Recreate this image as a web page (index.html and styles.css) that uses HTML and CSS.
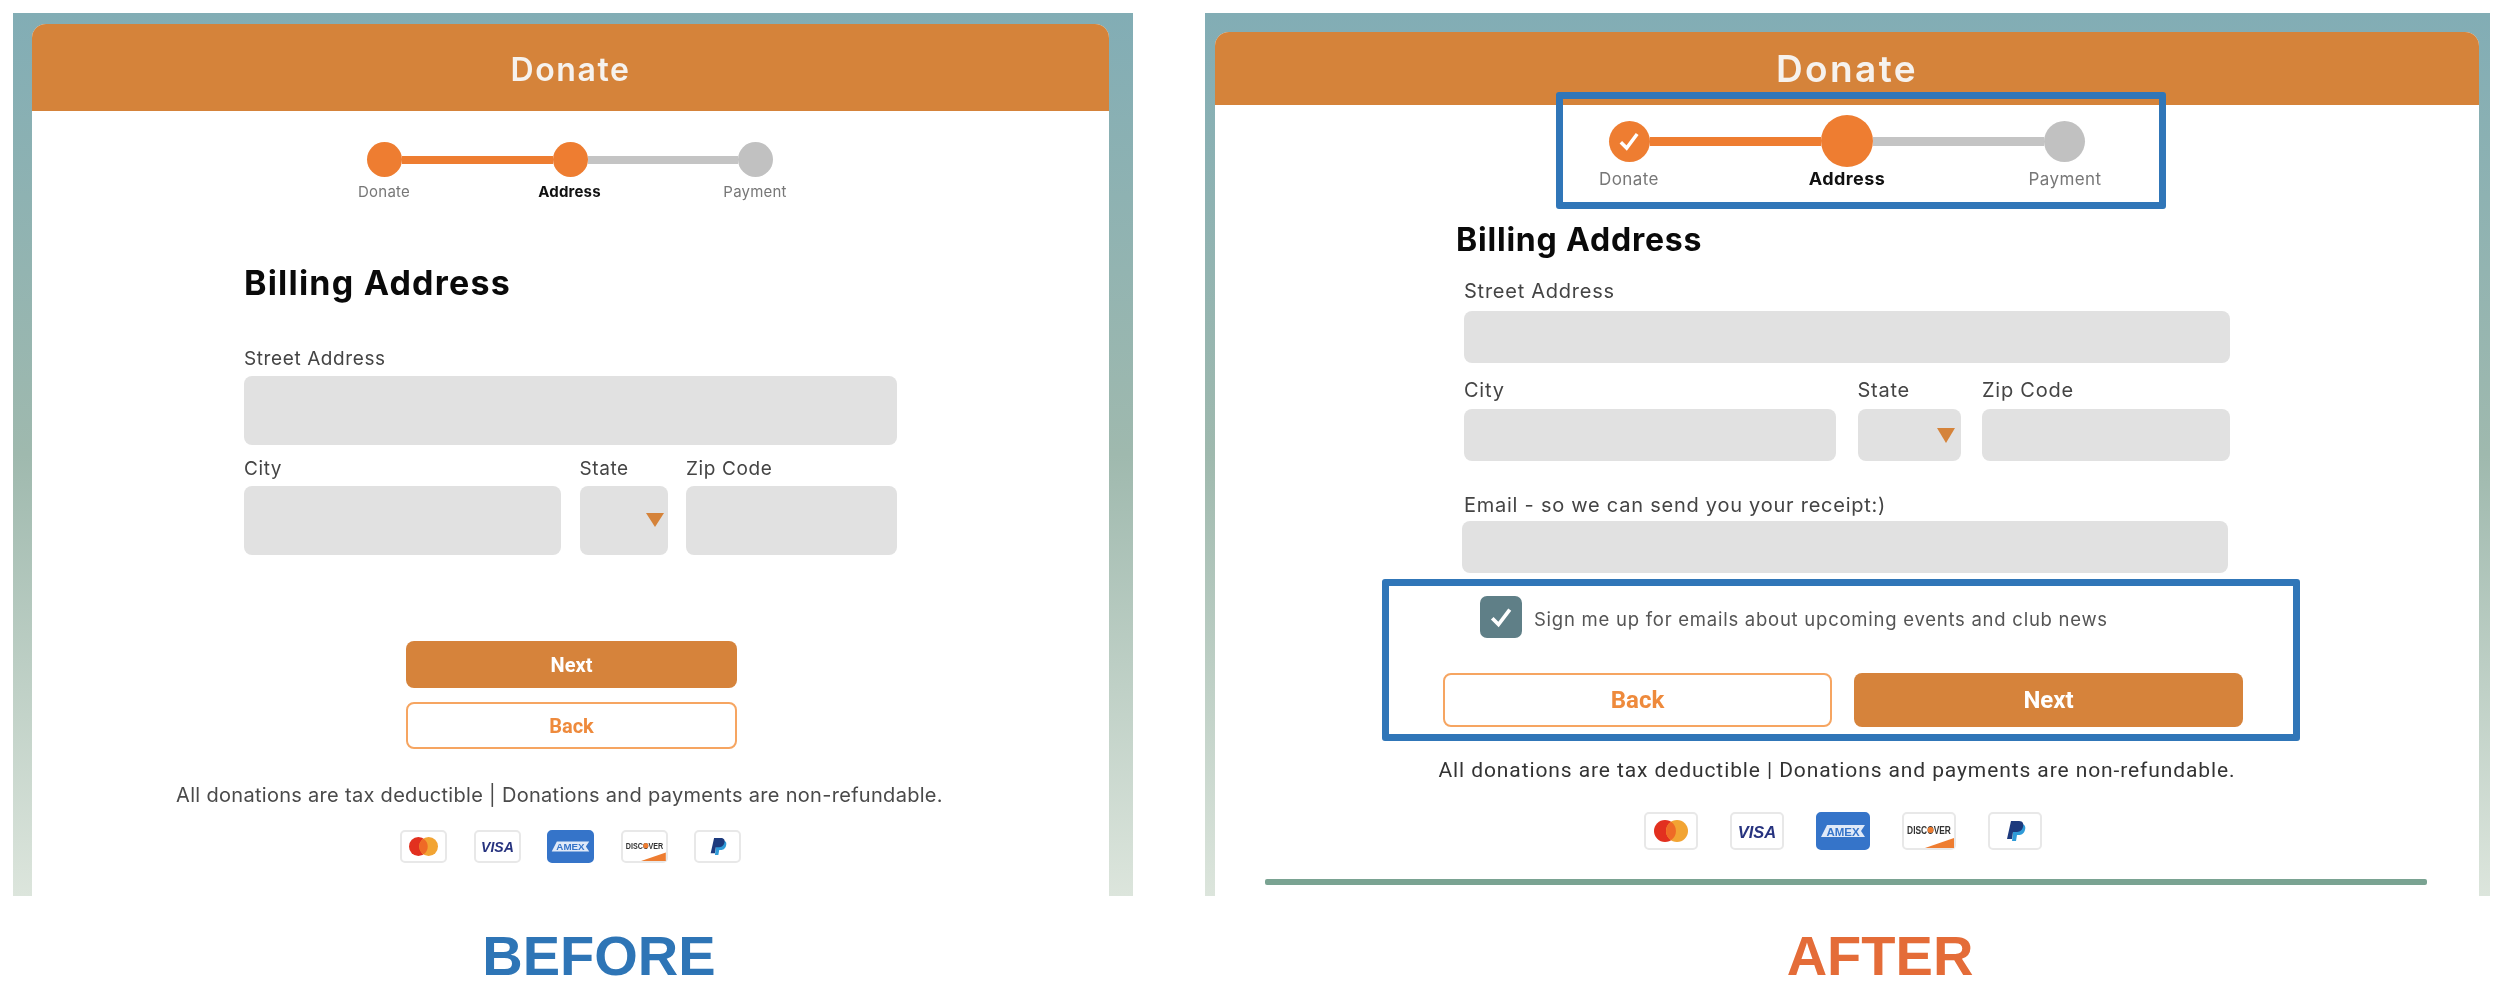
FILE: index.html
```html
<!DOCTYPE html>
<html lang="en">
<head>
  <meta charset="UTF-8">
  <title>Donate form before and after</title>
  <link rel="stylesheet" href="styles.css">
</head>
<body>
  <div class="compare">

    <!-- before -->
    <section class="side before">
      <div class="panel">
        <div class="card">
          <div class="card-head"><h1>Donate</h1></div>

          <div class="track">
            <span class="dot on"></span><span class="line on"></span>
            <span class="dot on"></span><span class="line"></span>
            <span class="dot"></span>
          </div>
          <div class="step-labels">
            <span>Donate</span>
            <span class="current">Address</span>
            <span>Payment</span>
          </div>

          <h2>Billing Address</h2>
          <form class="form">
            <label>Street Address</label>
            <div class="input"></div>
            <div class="row">
              <div><label>City</label><div class="input"></div></div>
              <div><label>State</label><div class="input select"><span class="arrow"></span></div></div>
              <div><label>Zip Code</label><div class="input"></div></div>
            </div>
          </form>

          <div class="buttons">
            <a class="btn next">Next</a>
            <a class="btn back">Back</a>
          </div>

          <p class="note">All donations are tax deductible | Donations and payments are non-refundable.</p>

          <div class="pays">
            <span class="pay">
              <svg viewBox="0 0 50 34"><circle cx="19" cy="17" r="11" fill="#e2301f"/><circle cx="31" cy="17" r="11" fill="#f2a433"/><path d="M25 7.8a11 11 0 0 1 0 18.4a11 11 0 0 1 0-18.4z" fill="#ef6a26"/></svg>
            </span>
            <span class="pay">
              <svg viewBox="0 0 50 34"><text x="25" y="23.5" class="visa" text-anchor="middle">VISA</text></svg>
            </span>
            <span class="pay amex">
              <svg viewBox="0 0 50 34"><path d="M3 23l6-12h38l-4 6 4 6z" fill="#dfe9f8"/><text x="25" y="21.5" class="amex-text" text-anchor="middle">AMEX</text></svg>
            </span>
            <span class="pay">
              <svg viewBox="0 0 50 34"><text transform="translate(25 19.5) scale(1 1.25)" class="discover" text-anchor="middle">DISCOVER</text><circle cx="26.5" cy="16" r="3" fill="#ee7d31"/><path d="M21 34l29-10v10z" fill="#ee7d31"/></svg>
            </span>
            <span class="pay">
              <svg viewBox="0 0 50 34"><path d="M24 10h7c4 0 5 3 4 6-1 4-4 5-6 5h-2l-1 6h-4z" fill="#2f9bd8"/><path d="M21 7h8c4 0 5 3 4 6-1 4-4 5-7 5h-3l-1 7h-5z" fill="#1d3a7d"/></svg>
            </span>
          </div>
        </div>
      </div>
      <div class="caption">BEFORE</div>
    </section>

    <!-- after -->
    <section class="side after">
      <div class="panel">
        <div class="card">
          <div class="card-head"><h1>Donate</h1></div>

          <div class="callout stepper">
            <div class="track">
              <span class="dot on"><svg viewBox="0 0 24 24"><path d="M5 13l5 5 9-12" fill="none" stroke="#fff" stroke-width="3"/></svg></span><span class="line on"></span>
              <span class="dot on big"></span><span class="line"></span>
              <span class="dot"></span>
            </div>
            <div class="step-labels">
              <span>Donate</span>
              <span class="current">Address</span>
              <span>Payment</span>
            </div>
          </div>

          <h2>Billing Address</h2>
          <form class="form">
            <label>Street Address</label>
            <div class="input"></div>
            <div class="row">
              <div><label>City</label><div class="input"></div></div>
              <div><label>State</label><div class="input select"><span class="arrow"></span></div></div>
              <div><label>Zip Code</label><div class="input"></div></div>
            </div>
            <label class="email-label">Email - so we can send you your receipt:)</label>
            <div class="input email"></div>
          </form>

          <div class="callout actions">
            <div class="signup">
              <span class="check"><svg viewBox="0 0 24 24"><path d="M5 13l5 5 9-12" fill="none" stroke="#fff" stroke-width="3"/></svg></span>
              <span class="signup-text">Sign me up for emails about upcoming events and club news</span>
            </div>
            <div class="buttons">
              <a class="btn back">Back</a>
              <a class="btn next">Next</a>
            </div>
          </div>

          <p class="note">All donations are tax deductible | Donations and payments are non-refundable.</p>

          <div class="pays">
            <span class="pay">
              <svg viewBox="0 0 50 34"><circle cx="19" cy="17" r="11" fill="#e2301f"/><circle cx="31" cy="17" r="11" fill="#f2a433"/><path d="M25 7.8a11 11 0 0 1 0 18.4a11 11 0 0 1 0-18.4z" fill="#ef6a26"/></svg>
            </span>
            <span class="pay">
              <svg viewBox="0 0 50 34"><text x="25" y="23.5" class="visa" text-anchor="middle">VISA</text></svg>
            </span>
            <span class="pay amex">
              <svg viewBox="0 0 50 34"><path d="M3 23l6-12h38l-4 6 4 6z" fill="#dfe9f8"/><text x="25" y="21.5" class="amex-text" text-anchor="middle">AMEX</text></svg>
            </span>
            <span class="pay">
              <svg viewBox="0 0 50 34"><text transform="translate(25 19.5) scale(1 1.25)" class="discover" text-anchor="middle">DISCOVER</text><circle cx="26.5" cy="16" r="3" fill="#ee7d31"/><path d="M21 34l29-10v10z" fill="#ee7d31"/></svg>
            </span>
            <span class="pay">
              <svg viewBox="0 0 50 34"><path d="M24 10h7c4 0 5 3 4 6-1 4-4 5-6 5h-2l-1 6h-4z" fill="#2f9bd8"/><path d="M21 7h8c4 0 5 3 4 6-1 4-4 5-7 5h-3l-1 7h-5z" fill="#1d3a7d"/></svg>
            </span>
          </div>

          <div class="rule"></div>
        </div>
      </div>
      <div class="caption">AFTER</div>
    </section>

  </div>
</body>
</html>
```

FILE: styles.css
```css
* {
  box-sizing: border-box;
}

body {
  margin: 0;
  background: #fff;
  font-family: "Inter", "Liberation Sans", sans-serif;
  color: #444;
}

.compare {
  display: flex;
  padding: 13px 10px 0 13px;
  gap: 72px;
}

.side {
  flex: none;
}

.before {
  width: 1120px;
}

.after {
  width: 1285px;
}

.panel {
  height: 883px;
  overflow: hidden;
  background: linear-gradient(#82adb5, #9fb9ae 50%, #dce5dc);
}

.before .panel {
  padding: 11px 24px 0 19px;
}

.after .panel {
  padding: 19px 11px 0 10px;
}

.card {
  height: 100%;
  background: #fff;
  border-radius: 14px 14px 0 0;
  filter: blur(0.6px);
}

.card-head {
  display: flex;
  align-items: center;
  justify-content: center;
  background: #d5833a;
  border-radius: 14px 14px 0 0;
}

.before .card-head {
  height: 87px;
  padding-top: 3px;
}

.after .card-head {
  height: 73px;
}

h1 {
  margin: 0;
  color: #f6f2ee;
  font-weight: 600;
}

.before h1 {
  font-size: 32px;
  letter-spacing: 1.6px;
}

.after h1 {
  font-size: 37px;
  letter-spacing: 2.4px;
}

/* stepper */
.track {
  display: flex;
  align-items: center;
}

.dot {
  display: flex;
  flex: none;
  align-items: center;
  justify-content: center;
  border-radius: 50%;
  background: #c1c1c1;
}

.dot.on {
  background: #ee7d31;
}

.line {
  flex: 1;
  background: #c4c4c4;
}

.line.on {
  background: #ee7d31;
}

.step-labels {
  display: grid;
  text-align: center;
  color: #777;
}

.step-labels .current {
  color: #111;
  font-weight: 700;
}

.before .track {
  width: 406px;
  margin: 31px 0 0 335px;
}

.before .dot {
  width: 35px;
  height: 35px;
}

.before .line {
  height: 8px;
}

.before .step-labels {
  grid-template-columns: repeat(3, 100px);
  column-gap: 85.5px;
  margin: 6px 0 0 302px;
  font-size: 15px;
  letter-spacing: 0.2px;
  line-height: 18px;
}

.callout {
  position: relative;
  border: 7px solid #3076b8;
  border-radius: 3px;
}

.stepper {
  width: 610px;
  height: 117px;
  margin: -13px 0 0 341px;
  padding: 16px 0 0 26px;
}

.after .track {
  width: 476px;
  margin-left: 19.5px;
}

.after .dot {
  width: 41px;
  height: 41px;
}

.after .dot svg {
  width: 28px;
  height: 28px;
}

.after .dot.big {
  width: 52px;
  height: 52px;
}

.after .line {
  height: 9px;
}

.after .step-labels {
  grid-template-columns: repeat(3, 80px);
  column-gap: 138px;
  margin-top: 2px;
  font-size: 17px;
  letter-spacing: 0.4px;
  line-height: 20px;
  white-space: nowrap;
}

.after .step-labels .current {
  font-size: 18px;
}

/* form */
h2 {
  margin: 0;
  color: #0a0a0a;
  font-weight: 700;
}

.before h2 {
  margin: 62px 0 0 212px;
  font-size: 34px;
  letter-spacing: 1.2px;
  line-height: 40px;
}

.after h2 {
  margin: 12px 0 0 241px;
  font-size: 32px;
  letter-spacing: 0.8px;
  line-height: 38px;
}

label {
  display: block;
  line-height: 24px;
  color: #444;
}

.input {
  background: #e1e1e1;
  border-radius: 8px;
}

.select {
  display: flex;
  align-items: center;
  justify-content: flex-end;
}

.arrow {
  width: 0;
  height: 0;
  border-style: solid;
  border-color: #d5833a transparent transparent;
}

.row {
  display: grid;
}

.before .form {
  width: 653px;
  margin: 44px 0 0 212px;
}

.before label {
  font-size: 19px;
  letter-spacing: 0.6px;
}

.before .input {
  height: 69px;
  margin-top: 5px;
}

.before .row {
  grid-template-columns: 317px 88px 1fr;
  column-gap: 18.5px;
  margin-top: 12px;
}

.before .arrow {
  margin: -1px 4px 0 0;
  border-width: 14px 9px 0;
}

.after .form {
  width: 766px;
  margin: 20px 0 0 249px;
}

.after label {
  font-size: 20px;
  letter-spacing: 0.75px;
}

.after .input {
  height: 52px;
  margin-top: 8px;
}

.after .row {
  grid-template-columns: 372px 103px 1fr;
  column-gap: 21.5px;
  margin-top: 15px;
}

.after .row .input {
  margin-top: 7px;
}

.after .arrow {
  margin: 0 6px 0 0;
  border-width: 15px 9.5px 0;
}

.after .email-label {
  margin-top: 32px;
}

.after .email {
  margin: 4px 2px 0 -2.5px;
}

/* buttons */
.btn {
  display: flex;
  align-items: center;
  justify-content: center;
  font-family: "Roboto", "Liberation Sans", sans-serif;
  font-weight: 700;
  border-radius: 8px;
}

.next {
  background: #d6833b;
  color: #fff;
}

.back {
  background: #fff;
  color: #ee8a3c;
  border: 2px solid #f6a561;
}

.before .buttons {
  width: 331px;
  margin: 86px 0 0 374px;
}

.before .btn {
  height: 47px;
  font-size: 20px;
}

.before .back {
  margin-top: 14px;
}

.actions {
  width: 918px;
  height: 162px;
  margin: 6px 0 0 167px;
  padding: 10px 0 0 54px;
}

.signup {
  display: flex;
  align-items: center;
  gap: 12px;
  margin-left: 37px;
}

.check {
  display: flex;
  align-items: center;
  justify-content: center;
  width: 42px;
  height: 42px;
  border-radius: 7px;
  background: #5f7f87;
}

.check svg {
  width: 30px;
  height: 30px;
}

.signup-text {
  padding-top: 4px;
  font-size: 18.5px;
  letter-spacing: 0.75px;
  color: #555;
}

.after .buttons {
  display: flex;
  gap: 22px;
  margin-top: 35px;
}

.after .btn {
  width: 389px;
  height: 54px;
  font-size: 24px;
}

/* footer of the card */
.note {
  margin: 0;
  line-height: 26px;
  text-align: center;
  white-space: nowrap;
}

.before .note {
  margin-top: 33px;
  padding-right: 22px;
  font-size: 20px;
  letter-spacing: 0.3px;
  color: #4a4a4a;
}

.after .note {
  margin-top: 16px;
  padding-right: 20px;
  font-family: "Roboto", "Liberation Sans", sans-serif;
  font-size: 21px;
  letter-spacing: 0.9px;
  color: #333;
}

.pays {
  display: flex;
  justify-content: center;
}

.pay {
  display: block;
  flex: none;
  border: 2px solid #e8e8e8;
  border-radius: 5px;
  background: #fff;
}

.pay svg {
  display: block;
  width: 100%;
  height: 100%;
}

.pay.amex {
  border-color: #3574c9;
  background: #3574c9;
}

.before .pays {
  gap: 26.5px;
  margin-top: 22px;
}

.before .pay {
  width: 47px;
  height: 33px;
}

.after .pays {
  gap: 32px;
  margin-top: 29px;
  padding-right: 8px;
}

.after .pay {
  width: 54px;
  height: 38px;
}

.visa {
  font-family: "Liberation Sans", sans-serif;
  font-size: 16.5px;
  font-style: italic;
  font-weight: 700;
  fill: #27337f;
}

.amex-text {
  font-family: "Liberation Sans", sans-serif;
  font-size: 11.5px;
  font-weight: 700;
  fill: #3574c9;
}

.discover {
  font-family: "Liberation Sans", sans-serif;
  font-size: 8.4px;
  font-weight: 700;
  fill: #333;
}

.rule {
  width: 1162px;
  height: 6px;
  margin: 29px 0 0 50px;
  border-radius: 2px;
  background: #7aa392;
}

/* captions */
.caption {
  padding-top: 30px;
  font-family: "Liberation Sans", sans-serif;
  font-size: 56px;
  font-weight: 700;
  line-height: 60px;
  text-align: center;
}

.before .caption {
  padding-left: 52px;
  color: #2e75b6;
}

.after .caption {
  padding-left: 65px;
  color: #e46c38;
}
```
